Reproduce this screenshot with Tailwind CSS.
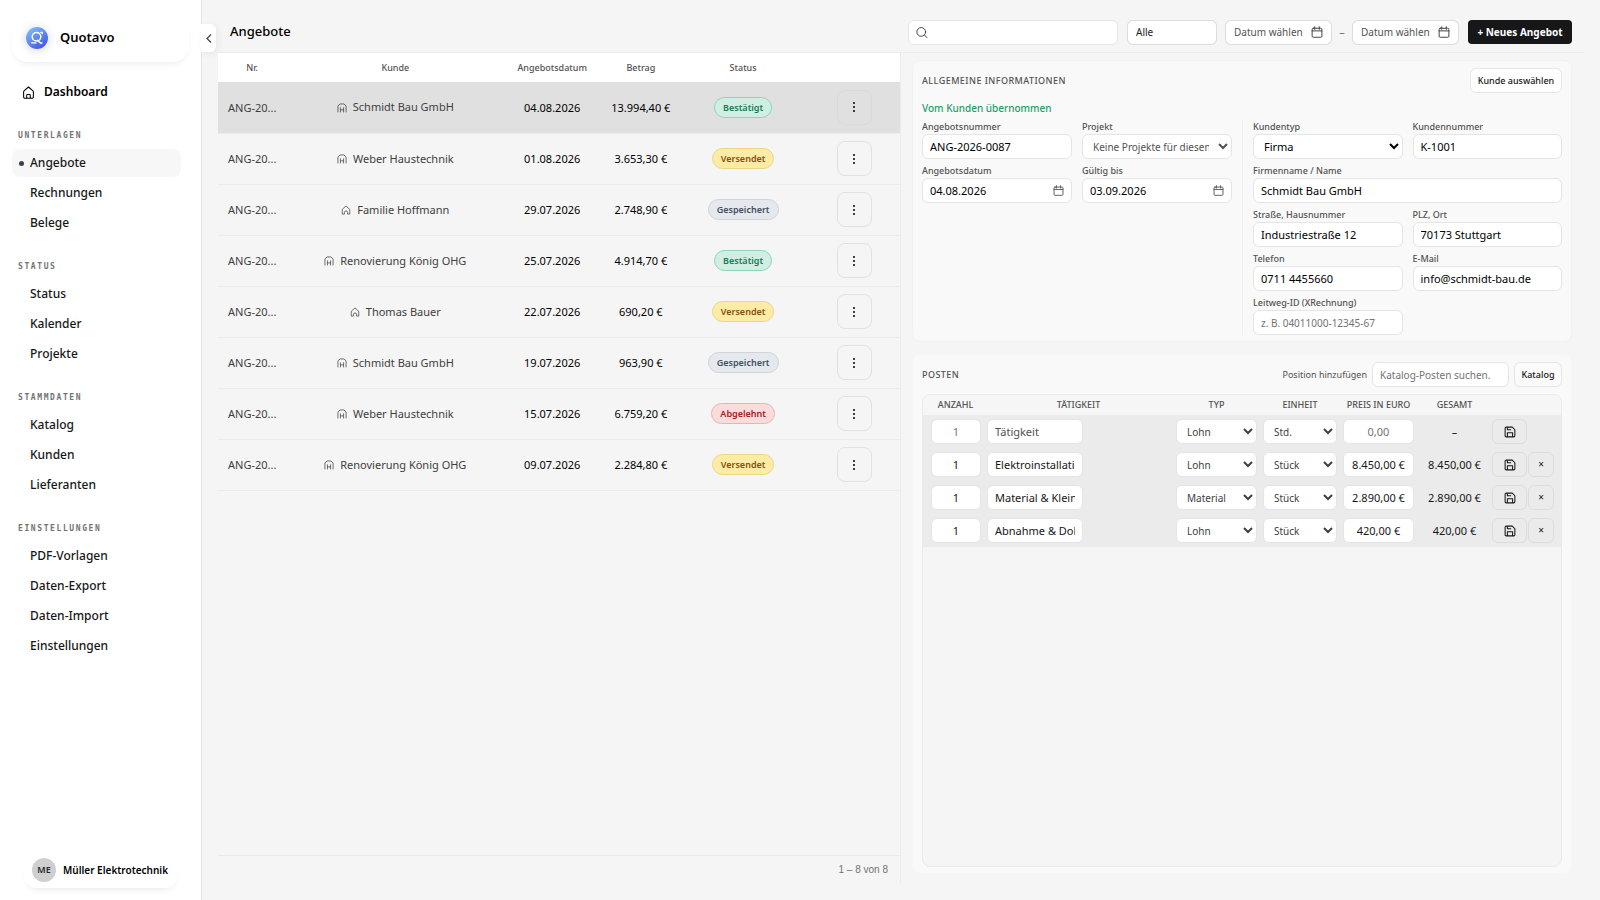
<!DOCTYPE html>
<html lang="de">
  <head>
    <meta charset="UTF-8" />
    <meta name="viewport" content="width=device-width, initial-scale=1.0" />
    <title>Quotavo – Angebote</title>
    <script src="https://cdn.jsdelivr.net/npm/@tailwindcss/browser@4"></script>
  </head>
  <body class="flex h-screen overflow-hidden bg-[#f5f5f5] font-['Noto_Sans',sans-serif] text-[11px] text-neutral-900">
    <!-- Icons -->
    <svg class="hidden">
      <symbol id="i-home" viewBox="0 0 16 16" fill="none" stroke="currentColor" stroke-width="1.300" stroke-linejoin="round">
        <path d="M3.500 15A1.500 1.500 0 0 1 2 13.500V7.200a2 2 0 0 1 .8-1.600L8 1.200l5.200 4.400a2 2 0 0 1 .8 1.600v6.300a1.500 1.500 0 0 1-1.500 1.500z" />
        <path d="M5.800 15v-3.500a1 1 0 0 1 1-1h2.400a1 1 0 0 1 1 1V15" />
      </symbol>
      <symbol id="i-person" viewBox="0 0 16 16" fill="none" stroke="currentColor" stroke-width="1.200" stroke-linejoin="round">
        <path d="M5.500 14.500H2V7l6-5.500L14 7v7.500h-3.500V12a2.500 2.500 0 0 0-5 0z" />
      </symbol>
      <symbol id="i-company" viewBox="0 0 16 16" fill="none" stroke="currentColor" stroke-width="1.200" stroke-linejoin="round">
        <path d="M1.500 15V4.500L5 1.500h6l3.500 3V15M5.500 7v8M10.500 7v8M5.500 11h5" />
      </symbol>
      <symbol id="i-search" viewBox="0 0 16 16" fill="none" stroke="currentColor" stroke-width="1.300" stroke-linecap="round">
        <circle cx="7.200" cy="7.200" r="6" />
        <path d="M11.600 11.600l3.600 3.600" />
      </symbol>
      <symbol id="i-calendar" viewBox="0 0 16 16" fill="none" stroke="currentColor" stroke-width="1.300" stroke-linecap="round">
        <rect x="1.500" y="3" width="13" height="12" rx="1.500" />
        <path d="M1.500 6.500h13M5 1v3.500M11 1v3.500" />
      </symbol>
      <symbol id="i-save" viewBox="0 0 16 16" fill="none" stroke="currentColor" stroke-width="1.400" stroke-linejoin="round">
        <path d="M1.500 3A1.500 1.500 0 0 1 3 1.500h8L14.500 5v8a1.500 1.500 0 0 1-1.500 1.500H3A1.500 1.500 0 0 1 1.500 13z" />
        <path d="M4.500 14.500V9h7v5.500M4.500 1.500v3.500h5" />
      </symbol>
    </svg>

    <!-- Sidebar -->
    <aside class="relative flex w-[202px] shrink-0 flex-col border-r border-neutral-200 bg-white">
      <div class="mx-3 mt-[14px] flex h-12 items-center gap-3 rounded-2xl pl-[14px] shadow-[0_4px_10px_-5px_rgba(0,0,0,0.14)]">
        <span class="flex size-[22px] rounded-full shadow-[0_1px_10px_rgba(0,0,0,0.18)]">
          <svg class="size-full" viewBox="0 0 22 22">
            <defs>
              <linearGradient id="logo" x1="0" y1="0" x2="0.7" y2="1">
                <stop offset="0" stop-color="#86c8f8" />
                <stop offset="1" stop-color="#4457e8" />
              </linearGradient>
            </defs>
            <circle cx="11" cy="11" r="11" fill="url(#logo)" />
            <g fill="none" stroke="#fff" stroke-linecap="round">
              <circle cx="10.500" cy="9.800" r="4.300" stroke-width="1.500" />
              <path d="M5.500 15.800h4.500M11.500 13.200l3 2.800h1.500M14.800 5.300h1.400v1.400" stroke-width="1.300" />
            </g>
          </svg>
        </span>
        <span class="text-[13px] font-semibold text-black">Quotavo</span>
      </div>

      <nav class="mx-3 mt-4 flex flex-1 flex-col text-[12px] font-medium text-neutral-900">
        <a href="#" class="flex h-7 items-center gap-[9px] pl-[10px] font-semibold text-black">
          <svg class="size-[13px]"><use href="#i-home" /></svg>Dashboard
        </a>
        <h2 class="mt-6 mb-[7px] pl-[6px] font-['DejaVu_Sans_Mono',monospace] text-[8px] leading-[12px] font-bold tracking-[0.2em] text-neutral-500">UNTERLAGEN</h2>
        <ul class="mr-2 flex flex-col gap-[2px]">
          <li>
            <a href="#" aria-current="page" class="flex h-7 items-center gap-[6px] rounded-lg bg-neutral-100/80 pl-[7px]">
              <span class="size-[5px] rounded-full bg-neutral-700"></span>Angebote
            </a>
          </li>
          <li><a href="#" class="flex h-7 items-center pl-[18px]">Rechnungen</a></li>
          <li><a href="#" class="flex h-7 items-center pl-[18px]">Belege</a></li>
        </ul>
        <h2 class="mt-6 mb-[7px] pl-[6px] font-['DejaVu_Sans_Mono',monospace] text-[8px] leading-[12px] font-bold tracking-[0.2em] text-neutral-500">STATUS</h2>
        <ul class="mr-2 flex flex-col gap-[2px]">
          <li><a href="#" class="flex h-7 items-center pl-[18px]">Status</a></li>
          <li><a href="#" class="flex h-7 items-center pl-[18px]">Kalender</a></li>
          <li><a href="#" class="flex h-7 items-center pl-[18px]">Projekte</a></li>
        </ul>
        <h2 class="mt-6 mb-[7px] pl-[6px] font-['DejaVu_Sans_Mono',monospace] text-[8px] leading-[12px] font-bold tracking-[0.2em] text-neutral-500">STAMMDATEN</h2>
        <ul class="mr-2 flex flex-col gap-[2px]">
          <li><a href="#" class="flex h-7 items-center pl-[18px]">Katalog</a></li>
          <li><a href="#" class="flex h-7 items-center pl-[18px]">Kunden</a></li>
          <li><a href="#" class="flex h-7 items-center pl-[18px]">Lieferanten</a></li>
        </ul>
        <h2 class="mt-6 mb-[7px] pl-[6px] font-['DejaVu_Sans_Mono',monospace] text-[8px] leading-[12px] font-bold tracking-[0.2em] text-neutral-500">EINSTELLUNGEN</h2>
        <ul class="mr-2 flex flex-col gap-[2px]">
          <li><a href="#" class="flex h-7 items-center pl-[18px]">PDF-Vorlagen</a></li>
          <li><a href="#" class="flex h-7 items-center pl-[18px]">Daten-Export</a></li>
          <li><a href="#" class="flex h-7 items-center pl-[18px]">Daten-Import</a></li>
          <li><a href="#" class="flex h-7 items-center pl-[18px]">Einstellungen</a></li>
        </ul>
      </nav>

      <button class="mx-6 mb-3 flex h-9 items-center gap-[7px] rounded-xl pl-2 text-[10px] font-semibold whitespace-nowrap text-black shadow-[0_5px_9px_-5px_rgba(0,0,0,0.12)]">
        <span class="flex size-6 shrink-0 items-center justify-center rounded-full bg-[#cfcfd1] text-[9px] text-neutral-800">ME</span>
        Müller Elektrotechnik
      </button>

      <button aria-label="Seitenleiste einklappen" class="absolute top-6 left-full flex h-7 w-[15px] items-center justify-center rounded-r-md bg-white text-neutral-700 shadow-[2px_2px_6px_rgba(0,0,0,0.06)]">
        <svg class="h-[9px] w-[6px]" viewBox="0 0 6 9" fill="none" stroke="currentColor" stroke-width="1.200"><path d="M5 .5l-4 4 4 4" /></svg>
      </button>
    </aside>

    <main class="flex min-w-0 flex-1 flex-col px-4 pb-4">
      <!-- Top bar -->
      <header class="flex h-[53px] shrink-0 items-center border-b border-[#ededed] pt-3 pr-3 pl-3">
        <h1 class="flex-1 text-[13px] font-medium text-black">Angebote</h1>
        <div class="flex h-[25px] items-center">
          <label class="flex h-full w-[210px] items-center gap-2 rounded-md border border-neutral-200 bg-white px-[7px] text-neutral-700">
            <svg class="size-[13px]"><use href="#i-search" /></svg>
            <input type="search" aria-label="Suche" class="w-full min-w-0 outline-none" />
          </label>
          <select aria-label="Statusfilter" class="ml-[9px] h-full w-[90px] appearance-none rounded-md border border-neutral-300/80 bg-white px-2 text-[10px] text-neutral-800">
            <option>Alle</option>
          </select>
          <button class="ml-2 flex h-full w-[107px] items-center justify-between rounded-md border border-neutral-300/80 bg-white px-2 text-[10px] whitespace-nowrap text-neutral-600">
            Datum wählen<svg class="size-3 text-neutral-700"><use href="#i-calendar" /></svg>
          </button>
          <span class="w-5 text-center text-neutral-500">–</span>
          <button class="flex h-full w-[107px] items-center justify-between rounded-md border border-neutral-300/80 bg-white px-2 text-[10px] whitespace-nowrap text-neutral-600">
            Datum wählen<svg class="size-3 text-neutral-700"><use href="#i-calendar" /></svg>
          </button>
          <button class="ml-[9px] h-6 w-[104px] rounded bg-[#17171a] text-[10px] font-bold whitespace-nowrap text-white">+ Neues Angebot</button>
        </div>
      </header>

      <div class="grid min-h-0 flex-1 grid-cols-2">
        <!-- Quote list -->
        <section class="flex flex-col border-r border-[#ebebeb]">
          <table class="w-full table-fixed text-center">
            <colgroup>
              <col class="w-[10%]" />
              <col class="w-[32%]" />
              <col class="w-[14%]" />
              <col class="w-[12%]" />
              <col class="w-[18%]" />
              <col class="w-[14%]" />
            </colgroup>
            <thead class="bg-white text-[9px] text-neutral-600">
              <tr class="h-[29px]">
                <th class="font-medium">Nr.</th>
                <th class="font-medium">Kunde</th>
                <th class="font-medium">Angebotsdatum</th>
                <th class="font-medium">Betrag</th>
                <th class="font-medium">Status</th>
                <th></th>
              </tr>
            </thead>
            <tbody id="quotes"></tbody>
          </table>
          <footer class="mt-auto border-t border-[#e9e9e9] px-3 py-[6px] text-right font-['Liberation_Sans',sans-serif] text-[10px] leading-4 text-neutral-500">1 – 8 von 8</footer>
        </section>

        <!-- Quote detail -->
        <section class="flex min-w-0 flex-col gap-3 pt-[7px] pr-3 pb-[10px] pl-[11px]">
          <form class="rounded-lg border border-[#f1f1f1] bg-[#f9f9f9] px-[9px] pt-[7px] pb-[6px]">
            <div class="flex h-[25px] items-center justify-between">
              <h2 class="text-[9px] font-medium tracking-wider text-neutral-600">ALLGEMEINE INFORMATIONEN</h2>
              <button type="button" class="h-[25px] w-[92px] rounded-md border border-neutral-200 bg-white text-[9px] font-medium whitespace-nowrap">Kunde auswählen</button>
            </div>
            <p class="mt-[7px] mb-1 text-[10px] leading-4 font-medium text-[#1f9d6b]">Vom Kunden übernommen</p>
            <div class="grid grid-cols-[31fr_32fr] gap-[10px]">
              <div class="grid grid-cols-2 content-start gap-x-[10px] gap-y-[5px]">
                <label class="text-[9px] leading-[14px] font-medium text-neutral-600">Angebotsnummer
                  <input value="ANG-2026-0087" class="block h-[25px] w-full rounded-md border border-neutral-200 bg-white px-[7px] text-[11px] font-normal text-black" />
                </label>
                <label class="text-[9px] leading-[14px] font-medium text-neutral-600">Projekt
                  <select class="block h-[25px] w-full rounded-md border border-neutral-200 bg-white px-[6px] text-[10px] font-normal text-neutral-600">
                    <option>Keine Projekte für diesen Kunden</option>
                  </select>
                </label>
                <label class="text-[9px] leading-[14px] font-medium text-neutral-600">Angebotsdatum
                  <span class="flex h-[25px] items-center rounded-md border border-neutral-200 bg-white px-[7px]">
                    <input value="04.08.2026" class="w-full min-w-0 text-[11px] font-normal text-black outline-none" />
                    <svg class="size-[11px] shrink-0"><use href="#i-calendar" /></svg>
                  </span>
                </label>
                <label class="text-[9px] leading-[14px] font-medium text-neutral-600">Gültig bis
                  <span class="flex h-[25px] items-center rounded-md border border-neutral-200 bg-white px-[7px]">
                    <input value="03.09.2026" class="w-full min-w-0 text-[11px] font-normal text-black outline-none" />
                    <svg class="size-[11px] shrink-0"><use href="#i-calendar" /></svg>
                  </span>
                </label>
              </div>
              <div class="grid grid-cols-2 gap-x-[10px] gap-y-[5px] border-l border-[#f0f0f0] pl-[10px]">
                <label class="text-[9px] leading-[14px] font-medium text-neutral-600">Kundentyp
                  <select class="block h-[25px] w-full rounded-md border border-neutral-200 bg-white px-[6px] text-[11px] font-normal text-black">
                    <option>Firma</option>
                  </select>
                </label>
                <label class="text-[9px] leading-[14px] font-medium text-neutral-600">Kundennummer
                  <input value="K-1001" class="block h-[25px] w-full rounded-md border border-neutral-200 bg-white px-[7px] text-[11px] font-normal text-black" />
                </label>
                <label class="col-span-2 text-[9px] leading-[14px] font-medium text-neutral-600">Firmenname / Name
                  <input value="Schmidt Bau GmbH" class="block h-[25px] w-full rounded-md border border-neutral-200 bg-white px-[7px] text-[11px] font-normal text-black" />
                </label>
                <label class="text-[9px] leading-[14px] font-medium text-neutral-600">Straße, Hausnummer
                  <input value="Industriestraße 12" class="block h-[25px] w-full rounded-md border border-neutral-200 bg-white px-[7px] text-[11px] font-normal text-black" />
                </label>
                <label class="text-[9px] leading-[14px] font-medium text-neutral-600">PLZ, Ort
                  <input value="70173 Stuttgart" class="block h-[25px] w-full rounded-md border border-neutral-200 bg-white px-[7px] text-[11px] font-normal text-black" />
                </label>
                <label class="text-[9px] leading-[14px] font-medium text-neutral-600">Telefon
                  <input value="0711 4455660" class="block h-[25px] w-full rounded-md border border-neutral-200 bg-white px-[7px] text-[11px] font-normal text-black" />
                </label>
                <label class="text-[9px] leading-[14px] font-medium text-neutral-600">E-Mail
                  <input value="info@schmidt-bau.de" class="block h-[25px] w-full rounded-md border border-neutral-200 bg-white px-[7px] text-[11px] font-normal text-black" />
                </label>
                <label class="text-[9px] leading-[14px] font-medium text-neutral-600">Leitweg-ID (XRechnung)
                  <input placeholder="z. B. 04011000-12345-67" class="block h-[25px] w-full rounded-md border border-neutral-200 bg-white px-[7px] text-[10px] font-normal placeholder:text-neutral-500" />
                </label>
              </div>
            </div>
          </form>

          <div class="flex min-h-0 flex-1 flex-col rounded-lg border border-[#f6f6f6] bg-[#f9f9f9] px-[9px] pt-[7px] pb-[6px]">
            <div class="flex h-[25px] items-center">
              <h2 class="flex-1 text-[9px] font-medium tracking-wider text-neutral-600">POSTEN</h2>
              <label for="catalog" class="pr-[5px] text-[9px] text-neutral-600">Position hinzufügen</label>
              <input id="catalog" placeholder="Katalog-Posten suchen." class="h-full w-[137px] rounded-md border border-neutral-200 bg-white px-[7px] text-[10px] placeholder:text-neutral-500" />
              <button class="ml-[5px] h-full w-12 rounded-md border border-neutral-200 bg-[#fbfbfb] text-[9px] font-medium">Katalog</button>
            </div>
            <div class="mt-[7px] flex-1 overflow-hidden rounded-lg border border-[#eaeaea] bg-[#f5f5f5]">
              <table class="w-full table-fixed text-center">
                <colgroup>
                  <col class="w-[61px]" />
                  <col />
                  <col class="w-[87px]" />
                  <col class="w-[80px]" />
                  <col class="w-[77px]" />
                  <col class="w-[75px]" />
                  <col class="w-[69px]" />
                </colgroup>
                <thead class="bg-[#f6f6f6] text-[9px] text-neutral-600">
                  <tr class="h-5">
                    <th class="pr-1 pl-2 font-medium">ANZAHL</th>
                    <th class="font-medium">TÄTIGKEIT</th>
                    <th class="font-medium">TYP</th>
                    <th class="font-medium">EINHEIT</th>
                    <th class="font-medium whitespace-nowrap">PREIS IN EURO</th>
                    <th class="font-medium">GESAMT</th>
                    <th></th>
                  </tr>
                </thead>
                <tbody id="items" class="bg-[#ebebeb]"></tbody>
              </table>
            </div>
          </div>
        </section>
      </div>
    </main>

    <script>
      const badges = {
        Bestätigt: "border-[#8fd3b8] bg-[#d0efe2] text-[#1b7a55]",
        Versendet: "border-[#ecd584] bg-[#fdeba6] text-[#85500f]",
        Gespeichert: "border-[#ccd3da] bg-[#e5e9ed] text-[#435062]",
        Abgelehnt: "border-[#eeb0b0] bg-[#fbdcdc] text-[#a32020]",
      };

      const quotes = [
        ["company", "Schmidt Bau GmbH", "04.08.2026", "13.994,40 €", "Bestätigt"],
        ["company", "Weber Haustechnik", "01.08.2026", "3.653,30 €", "Versendet"],
        ["person", "Familie Hoffmann", "29.07.2026", "2.748,90 €", "Gespeichert"],
        ["company", "Renovierung König OHG", "25.07.2026", "4.914,70 €", "Bestätigt"],
        ["person", "Thomas Bauer", "22.07.2026", "690,20 €", "Versendet"],
        ["company", "Schmidt Bau GmbH", "19.07.2026", "963,90 €", "Gespeichert"],
        ["company", "Weber Haustechnik", "15.07.2026", "6.759,20 €", "Abgelehnt"],
        ["company", "Renovierung König OHG", "09.07.2026", "2.284,80 €", "Versendet"],
      ];

      const items = [
        ["", "", "Lohn", "Std.", "", "–"],
        ["1", "Elektroinstallation", "Lohn", "Stück", "8.450,00 €", "8.450,00 €"],
        ["1", "Material &amp; Kleinmaterial", "Material", "Stück", "2.890,00 €", "2.890,00 €"],
        ["1", "Abnahme &amp; Dokumentation", "Lohn", "Stück", "420,00 €", "420,00 €"],
      ];

      document.getElementById("quotes").innerHTML = quotes
        .map(
          ([icon, name, date, amount, status], i) => `
          <tr class="h-[51px] border-b border-[#ebebeb] ${i === 0 ? "bg-[#e0e0e0]" : ""}">
            <td class="pt-[2px] pl-[10px] text-left text-neutral-700">ANG-20...</td>
            <td class="text-neutral-700">
              <span class="inline-flex items-center gap-[6px] align-middle"><svg class="size-[10px]"><use href="#i-${icon}" /></svg>${name}</span>
            </td>
            <td class="pt-[2px] text-black">${date}</td>
            <td class="pt-[2px] text-black">${amount}</td>
            <td><span class="inline-block rounded-full border px-2 text-[9px] leading-[19px] font-semibold ${badges[status]}">${status}</span></td>
            <td class="pl-1">
              <button aria-label="Aktionen" class="inline-flex size-[35px] items-center justify-center rounded-lg border border-neutral-300/60 align-middle">
                <svg class="h-3 w-1" viewBox="0 0 4 12"><circle cx="2" cy="2" r="1" /><circle cx="2" cy="6" r="1" /><circle cx="2" cy="10" r="1" /></svg>
              </button>
            </td>
          </tr>`
        )
        .join("");

      document.getElementById("items").innerHTML = items
        .map(
          ([count, title, type, unit, price, total], i) => `
          <tr class="h-[33px]">
            <td class="pr-[3px] pl-2"><input aria-label="Anzahl" value="${count}" placeholder="1" class="block h-[25px] w-full rounded-md border border-neutral-200 bg-white text-center placeholder:text-neutral-500" /></td>
            <td class="pl-[3px]"><input aria-label="Tätigkeit" value="${title}" placeholder="Tätigkeit" class="block h-[25px] w-24 rounded-md border border-neutral-200 bg-white px-[7px] placeholder:text-neutral-600" /></td>
            <td class="px-[3px]"><select aria-label="Typ" class="block h-[25px] w-full rounded-md border border-neutral-200 bg-white px-[6px] text-[10px] text-neutral-700"><option>${type}</option></select></td>
            <td class="px-[3px]"><select aria-label="Einheit" class="block h-[25px] w-full rounded-md border border-neutral-200 bg-white px-[6px] text-[10px] text-neutral-700"><option>${unit}</option></select></td>
            <td class="px-[3px]"><input aria-label="Preis in Euro" value="${price}" placeholder="0,00" class="block h-[25px] w-full rounded-md border border-neutral-200 bg-white text-center placeholder:text-neutral-500" /></td>
            <td class="pt-[2px]">${total}</td>
            <td>
              <div class="flex gap-px">
                <button aria-label="Speichern" class="flex h-[25px] w-[35px] items-center justify-center rounded-md border border-neutral-300/60"><svg class="size-3"><use href="#i-save" /></svg></button>
                ${i > 0 ? `<button aria-label="Entfernen" class="h-[25px] w-[26px] rounded-md border border-neutral-300/60 text-[10px]">×</button>` : ""}
              </div>
            </td>
          </tr>`
        )
        .join("");
    </script>
  </body>
</html>
